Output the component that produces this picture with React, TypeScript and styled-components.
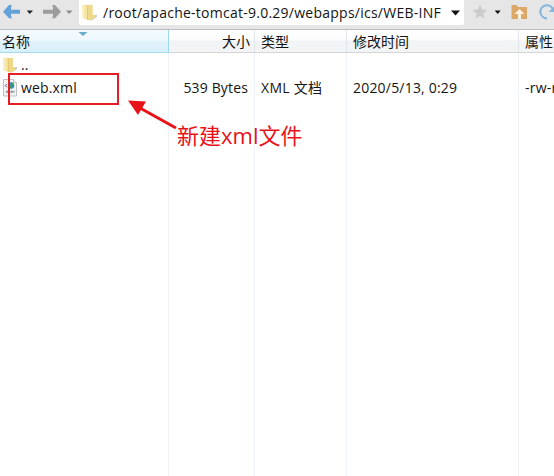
import React from "react";
import styled, { createGlobalStyle } from "styled-components";

const Global = createGlobalStyle`
  * { box-sizing: border-box; }
  body { margin: 0; background: #fff; overflow: hidden; }
`;

const Window = styled.div`
  position: relative;
  width: 554px;
  height: 476px;
  overflow: hidden;
  background: #fff;
  color: #141414;
  font: 14px/20px "Open Sans", "Noto Sans CJK SC", sans-serif;
  white-space: nowrap;
  display: flex;
  flex-direction: column;
`;

const Toolbar = styled.div`
  height: 30px;
  flex: none;
  display: flex;
  background: #e6e6e6;
  border-bottom: 1px solid #bdbdbd;
`;

const NavGroup = styled.div`
  width: 79px;
  height: 25px;
  flex: none;
`;

const AddressBar = styled.div`
  width: 385px;
  height: 25px;
  flex: none;
  display: flex;
  align-items: center;
  padding-left: 2px;
  background: #fff;
  border-radius: 0 0 2px 2px;
`;

const Path = styled.span`
  width: 348px;
  margin-left: 5px;
  letter-spacing: 0.25px;
`;

const Actions = styled.div`
  width: 90px;
  height: 25px;
`;

const Header = styled.div`
  position: relative;
  height: 23px;
  flex: none;
  display: grid;
  grid-template-columns: 169px 86px 92px 172px 1fr;
  background: linear-gradient(#fff 0%, #fcfcfd 45%, #f2f3f5 50%, #f3f4f6 100%);
  border-bottom: 1px solid #d5d5d5;
`;

const HeaderCell = styled.div<{ $active?: boolean; $right?: boolean }>`
  height: ${(p) => (p.$active ? 23 : 22)}px;
  padding: ${(p) => (p.$active ? "0 2px" : p.$right ? "0 4px" : "0 6px")};
  line-height: 23px;
  text-align: ${(p) => (p.$right ? "right" : "left")};
  background: ${(p) => (p.$active ? "linear-gradient(#f3fafd 0%, #eef8fc 48%, #e0f2fa 52%, #daeff8 100%)" : "none")};
  border-right: 1px solid ${(p) => (p.$active ? "#9bd8ee" : "#e1e6eb")};
  border-bottom: ${(p) => (p.$active ? "1px solid #a3dcf0" : "none")};

  &:nth-child(5) {
    border-right: none;
    padding-right: 0;
  }
`;

const SortMark = styled.svg`
  position: absolute;
  left: 78px;
  top: 2px;
`;

const List = styled.div`
  flex: 1;
  display: grid;
  grid-template-columns: 169px 86px 92px 172px 1fr;
`;

const Column = styled.div<{ $right?: boolean }>`
  padding: 0 6px;
  overflow: hidden;
  text-align: ${(p) => (p.$right ? "right" : "left")};
  border-right: 1px solid #edf4fb;

  &:last-child {
    border-right: none;
  }
`;

const NameColumn = styled(Column)`
  padding: 0 0 0 2px;
`;

const Cell = styled.div<{ $spacing?: number }>`
  height: 23px;
  line-height: 23px;
  letter-spacing: ${(p) => p.$spacing || 0}px;
`;

const FileName = styled(Cell)`
  display: flex;
  align-items: center;
  gap: 3px;
`;

const RedFrame = styled.div`
  position: absolute;
  left: 8px;
  top: 73px;
  width: 111px;
  height: 32px;
  border: 2px solid #e51c23;
`;

const Arrow = styled.svg`
  position: absolute;
  left: 124px;
  top: 96px;
`;

const Note = styled.div`
  position: absolute;
  left: 177px;
  top: 120px;
  font: 22px/30px "Open Sans", "Noto Sans CJK SC", sans-serif;
  color: #e81219;
`;

const Folder = ({ size = 16 }: { size?: number }) => (
  <svg width={size} height={size} viewBox="0 0 16 16">
    <path d="m9 11 6-1v2l-5 3.500-3-.5z" fill="#c9cccb" />
    <path d="M6 1.200 11 .8v9l2 .8v2.600L8 15.400l-3-1z" fill="#f0d988" />
    <path d="M1 1.500 5.500.5 7 2v13L1.500 13.400z" fill="#f6e6a6" />
    <path d="m5.800.8 1 1.100V15l-1-.4z" fill="#e3c465" />
    <path d="M2.200 2v11.200" stroke="#fff4c9" />
  </svg>
);

const XmlFile = () => (
  <svg width="16" height="18" viewBox="0 0 16 18">
    <path d="M1.500.5h10l3 3v13.500h-13z" fill="#f2f2f2" stroke="#bfc1c2" />
    <path d="M11.500.5v3h3" fill="#fff" stroke="#bfc1c2" />
    <circle cx="9" cy="6.500" r="3.200" fill="#2688c4" />
    <path d="M9 3.400q2.500-.2 3.100 2L10.500 7 9 5.500zM7 6l2 1 1 2-1 .6q-2-1-2-3.600" fill="#3ca653" />
    <path d="m5 5-1.700 1.700L5 8.400" fill="none" stroke="#596b84" />
    <path d="M4 12.800h8.500" stroke="#8b8f99" strokeWidth="2" strokeDasharray="2 .5" />
  </svg>
);

export default function App() {
  return (
    <Window>
      <Global />
      <Toolbar>
        <NavGroup>
          <svg width="79" height="25">
            <path d="M3 11.700 9 5h3l-2 4.700h10v4H10l2 4.600H9z" fill="#62a2d8" />
            <path d="M8 7h3v9.500H8z" fill="#62a2d8" />
            <path d="M26.700 10.500h6.300L29.800 14z" fill="#222" />
            <path d="m61 11.700-6-6.700h-3l2 4.700H43v4h11l-2 4.600h3z" fill="#9d9d9d" />
            <path d="M53 7h3v9.500h-3z" fill="#9d9d9d" />
            <path d="M66 10.500h6.500L69.200 14z" fill="#898989" />
          </svg>
        </NavGroup>
        <AddressBar>
          <Folder size={17} />
          <Path>/root/apache-tomcat-9.0.29/webapps/ics/WEB-INF</Path>
          <svg width="10" height="8"><path d="M0 1.500h9L4.500 6.500z" fill="#111" /></svg>
        </AddressBar>
        <Actions>
          <svg width="90" height="25">
            <path d="m16 4.500 2 5 5.300.4-4 3.500 1.300 5.100-4.600-2.800-4.600 2.800 1.300-5.100-4-3.500 5.300-.4z" fill="#cbcbcb" />
            <path d="M30.700 10.500h6L33.700 14z" fill="#111" />
            <path d="M47.500 5h5l1.500 2h9v12H47.500z" fill="#dba869" />
            <path d="m55.500 9 5 5H57v5h-3v-5h-3.500z" fill="#fff1df" />
            <path d="M89 9.500A6.500 6.500 0 1 0 83 18.300" fill="none" stroke="#85b6df" strokeWidth="2.2" />
            <path d="M84.500 12H91V6z" fill="#85b6df" />
          </svg>
        </Actions>
      </Toolbar>
      <Header>
        <HeaderCell $active>名称</HeaderCell>
        <HeaderCell $right>大小</HeaderCell>
        <HeaderCell>类型</HeaderCell>
        <HeaderCell>修改时间</HeaderCell>
        <HeaderCell>属性</HeaderCell>
        <SortMark width="10" height="5"><path d="M.5 0h9L5 4z" fill="#68adc9" /></SortMark>
      </Header>
      <List>
        <NameColumn>
          <FileName><Folder /><span>..</span></FileName>
          <FileName $spacing={0.15}><XmlFile /><span>web.xml</span></FileName>
        </NameColumn>
        <Column $right><Cell /><Cell $spacing={0.15}>539 Bytes</Cell></Column>
        <Column><Cell /><Cell $spacing={0.3}>XML 文档</Cell></Column>
        <Column><Cell /><Cell $spacing={0.2}>2020/5/13, 0:29</Cell></Column>
        <Column><Cell /><Cell $spacing={0.2}>-rw-r--r--</Cell></Column>
      </List>
      <RedFrame />
      <Arrow width="56" height="36">
        <path d="M16 12 52 32" stroke="#e81219" strokeWidth="3" />
        <path d="M4 4.500 22 5.500 14 19z" fill="#e81219" />
      </Arrow>
      <Note>新建xml文件</Note>
    </Window>
  );
}
